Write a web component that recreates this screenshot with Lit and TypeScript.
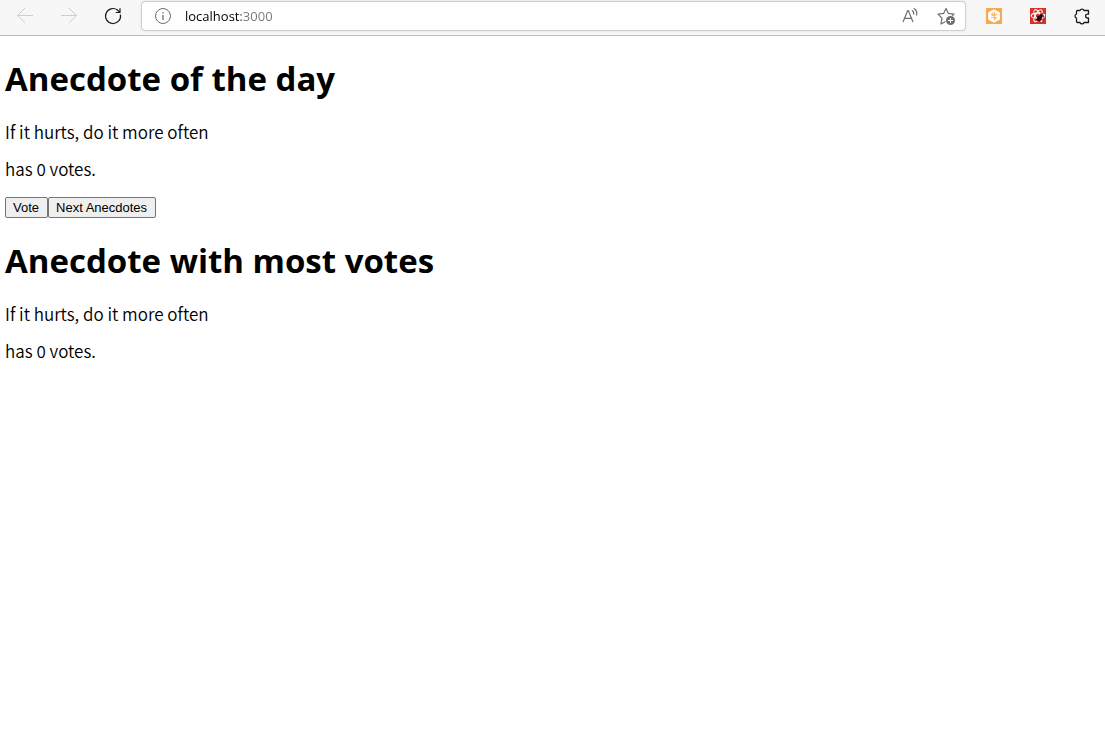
import { LitElement, html, css } from "lit";
import { customElement, property, state } from "lit/decorators.js";

@customElement("browser-bar")
class BrowserBar extends LitElement {
  @property() address = "";

  static styles = css`
    :host {
      display: block;
    }
    .bar {
      display: flex;
      align-items: center;
      height: 32px;
      padding: 0 9px 3px 11px;
      background: #f7f7f7;
      border-bottom: 1px solid #bdbdbd;
    }
    button {
      display: grid;
      place-items: center;
      flex: none;
      width: 28px;
      height: 28px;
      padding: 0;
      border: 0;
      background: none;
      color: #1b1b1b;
    }
    button:disabled {
      color: #cdcdcd;
    }
    svg {
      display: block;
      width: 20px;
      height: 20px;
      fill: none;
      stroke: currentColor;
    }
    .logo {
      stroke: none;
    }
    .nav,
    .extensions {
      display: flex;
      gap: 16px;
    }
    .field {
      display: flex;
      flex: 1;
      align-items: center;
      min-width: 0;
      height: 28px;
      margin: 0 14px;
      padding: 0 5px 0 7px;
      border: 1px solid #cfcfcf;
      border-radius: 4px;
      background: #fff;
      box-shadow: 0 0 2px #d8d8d8;
    }
    .field button {
      color: #6e6e6e;
    }
    .actions {
      display: flex;
      gap: 8px;
    }
    input {
      flex: 1;
      min-width: 0;
      margin-left: 8px;
      padding: 0;
      border: 0;
      outline: 0;
      font: 13px/20px "Open Sans", "Noto Sans", sans-serif;
      color: transparent;
      caret-color: #000;
      background: linear-gradient(90deg, #000 56px, #767676 56px);
      -webkit-background-clip: text;
      background-clip: text;
    }
  `;

  render() {
    return html`
      <header class="bar">
        <nav class="nav">
          <button disabled aria-label="Back">
            <svg viewBox="0 0 20 20"><path d="M18 9.500H2.500M10 2 2.500 9.500l7.500 7.500" /></svg>
          </button>
          <button disabled aria-label="Forward">
            <svg viewBox="0 0 20 20"><path d="M2 9.500h15.500M10 2l7.500 7.500-7.500 7.500" /></svg>
          </button>
          <button aria-label="Refresh">
            <svg viewBox="0 0 20 20" stroke-width="1.200">
              <path d="M17.400 8.500A7.500 7.500 0 1 1 14.500 4L16.800 6.300M17 2.300v4.200h-4.300" />
            </svg>
          </button>
        </nav>
        <div class="field">
          <button aria-label="Site information">
            <svg viewBox="0 0 20 20">
              <circle cx="10" cy="10" r="7.500" />
              <path d="M10 9v5" stroke-width="1.300" />
              <circle cx="10" cy="6.700" r=".8" fill="currentColor" stroke="none" />
            </svg>
          </button>
          <input type="text" aria-label="Address" .value=${this.address} />
          <div class="actions">
            <button aria-label="Read aloud">
              <svg viewBox="0 0 20 20" stroke-width="1.200">
                <path d="M3 16 7.700 4.500h.6L13 16M4.600 12.300h6.800" />
                <path d="M11.800 4.300q2.400 1.500 1.800 4.200M13.800 2.300q4.200 2.900 2.700 7.200" />
              </svg>
            </button>
            <button aria-label="Add to favorites">
              <svg viewBox="0 0 20 20">
                <path
                  d="M9.500 15.500 5 18l.9-5.800L2 8.200l5.600-.8L10 2.500l2.400 4.900 5.600.8-2 2"
                  stroke-width="1.200"
                  stroke-linejoin="round"
                />
                <circle cx="14.500" cy="14.500" r="4.500" fill="currentColor" stroke="none" />
                <path d="M14.500 12v5M12 14.500h5" stroke="#fff" />
              </svg>
            </button>
          </div>
        </div>
        <div class="extensions">
          <button aria-label="Hexagon extension">
            <svg class="logo" viewBox="0 0 20 20">
              <path d="M2 2h16v16H2z" fill="#f9a84d" />
              <path d="m10 3.200 5.900 3.400v6.800L10 16.800l-5.900-3.400V6.600z" fill="#fff" />
              <g fill="none" stroke="#f9b76b" stroke-width="1.200">
                <path d="M10.500 6v8M7 8.500l6 3M7.500 12l5.500-4M8 6.800l4 6.500" />
              </g>
            </svg>
          </button>
          <button aria-label="React extension">
            <svg class="logo" viewBox="0 0 20 20">
              <path d="M2 2h16v16H2z" fill="#d6312b" />
              <g fill="none" stroke="#fff" stroke-width="1.100">
                <ellipse cx="10" cy="9.700" rx="6.700" ry="2.600" />
                <ellipse cx="10" cy="9.700" rx="6.700" ry="2.600" transform="rotate(60 10 9.700)" />
                <ellipse cx="10" cy="9.700" rx="6.700" ry="2.600" transform="rotate(120 10 9.700)" />
              </g>
              <ellipse cx="11.300" cy="12.300" rx="2.200" ry="3.200" transform="rotate(35 11.300 12.300)" fill="#1c0b0b" />
              <circle cx="13.300" cy="9.300" r="1.400" fill="#1c0b0b" />
              <path
                d="m8.500 10 7 4.500M8 13l5 3.500M12 8l3.500-.5M13 10.500l3.500.5"
                fill="none"
                stroke="#1c0b0b"
                stroke-width=".8"
              />
            </svg>
          </button>
          <button aria-label="Extensions">
            <svg viewBox="0 0 20 20">
              <path
                d="M5.500 4.500H8a2.100 2.100 0 0 1 4 0h4.500v3.700h-1a1.900 1.900 0 0 0 0 3.800h1v4.500H12a2.100 2.100 0 0 1-4 0H5.500q-1 0-1-1V12a2.100 2.100 0 0 1 0-4V5.500q0-1 1-1z"
                stroke-width="1.300"
                stroke-linejoin="round"
              />
            </svg>
          </button>
        </div>
      </header>
    `;
  }
}

@customElement("anecdote-entry")
class AnecdoteEntry extends LitElement {
  @property() heading = "";
  @property() text = "";
  @property({ type: Number }) votes = 0;

  static styles = css`
    :host {
      display: block;
    }
    h1 {
      margin: 21px 0;
      font: 700 33px/42px "Open Sans", "Noto Sans", sans-serif;
    }
    p {
      margin: 16px 0;
    }
  `;

  render() {
    return html`
      <h1>${this.heading}</h1>
      <p>${this.text}</p>
      <p>has ${this.votes} votes.</p>
    `;
  }
}

@customElement("app-root")
class AppRoot extends LitElement {
  private anecdotes = [
    "If it hurts, do it more often",
    "Adding manpower to a late software project makes it later!",
    "Premature optimization is the root of all evil.",
  ];

  @state() private selected = 0;
  @state() private votes = [0, 0, 0];

  static styles = css`
    :host {
      display: block;
      min-height: 100vh;
      background: #fff;
      color: #000;
    }
    main {
      padding: 1px 5px;
      font: 350 17px/21px "Noto Sans CJK SC", "Noto Sans", sans-serif;
    }
    .controls {
      display: flex;
      padding: 2px 0 1px;
    }
    .controls button {
      height: 21px;
      padding: 0 8px 0 7px;
      border: 1px solid #767676;
      border-radius: 2px;
      background: #efefef;
      color: #000;
      font: 13px/15px "Liberation Sans", Arial, sans-serif;
    }
  `;

  private vote() {
    this.votes = this.votes.map((n, i) => (i === this.selected ? n + 1 : n));
  }

  private next() {
    this.selected = (this.selected + 1) % this.anecdotes.length;
  }

  render() {
    const top = this.votes.indexOf(Math.max(...this.votes));
    return html`
      <browser-bar address="localhost:3000"></browser-bar>
      <main>
        <anecdote-entry
          heading="Anecdote of the day"
          .text=${this.anecdotes[this.selected]}
          .votes=${this.votes[this.selected]}
        ></anecdote-entry>
        <div class="controls">
          <button @click=${this.vote}>Vote</button>
          <button @click=${this.next}>Next Anecdotes</button>
        </div>
        <anecdote-entry
          heading="Anecdote with most votes"
          .text=${this.anecdotes[top]}
          .votes=${this.votes[top]}
        ></anecdote-entry>
      </main>
    `;
  }
}
